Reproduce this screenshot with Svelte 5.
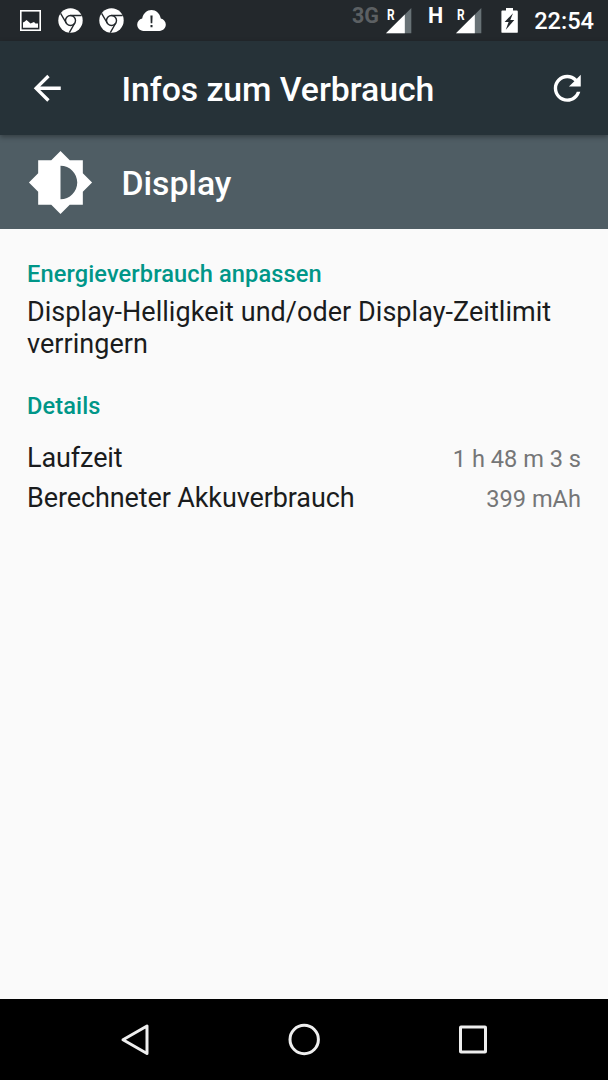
<script>
    const notifications = ["image", "chrome", "chrome", "cloud"];

    const signals = [
        { type: "3G", active: false },
        { type: "H", active: true }
    ];

    const details = [
        { label: "Laufzeit", value: "1 h 48 m 3 s" },
        { label: "Berechneter Akkuverbrauch", value: "399 mAh" }
    ];
</script>

<div class="screen">
    <div class="status-bar">
        <div class="notifications">
            {#each notifications as icon}
                {#if icon === "image"}
                    <svg class="image" width="21" height="21" viewBox="0 0 21 21">
                        <rect x=".8" y=".8" width="19.4" height="19.4" fill="none" stroke="#fff" stroke-width="1.6" />
                        <path d="M3 17.8V12.5L4.5 11.8 6.5 10l1.5 1.3 2.5 2.2 3.5-1.5 1.5 1.5h2.5v4.3z" fill="#fff" />
                    </svg>
                {:else if icon === "chrome"}
                    <svg class="chrome" width="25" height="25" viewBox="0 0 25 25">
                        <circle cx="12.5" cy="12.5" r="12.2" fill="#fff" />
                        <g fill="none" stroke="#23282c" stroke-width="1.4">
                            <circle cx="12.5" cy="12.5" r="5" />
                            <path d="M12.5 7.5h11.2M8.2 15L2.6 5.3M16.8 15l-5.5 9.6" />
                        </g>
                    </svg>
                {:else}
                    <svg class="cloud" width="29" height="21" viewBox="0 0 29 21">
                        <path d="M23.8 8.5C22.6 3.2 19 .1 14.5.1S6.4 3.2 5.2 8.5C2.3 9.3.2 11.5.2 14.6c0 3.7 2.6 6.3 6.3 6.3h16c3.7 0 6.3-2.6 6.3-6.3 0-3.1-2.1-5.3-5-6.1z" fill="#fff" />
                        <path d="M13.4 5.5h2.2l-.3 7.8h-1.6zM13.5 15h2v2.2h-2z" fill="#23282c" />
                    </svg>
                {/if}
            {/each}
        </div>
        <div class="system">
            {#each signals as { type, active }}
                <span class="network" class:active>{type}</span>
                <span class="signal">
                    <span class="roaming">R</span>
                    <svg width="26" height="26" viewBox="0 0 26 26">
                        <path d="M25.3 0v25.3H0z" fill="#687276" />
                        <path d="M18.8 6.5v18.8H0z" fill="#fff" />
                    </svg>
                </span>
            {/each}
            <svg class="battery" width="17" height="25" viewBox="0 0 17 25">
                <path d="M5 0h7v2.5h3.9c.5 0 .9.4.9.9v20.5c0 .5-.4.9-.9.9H1.3c-.5 0-.9-.4-.9-.9V3.4c0-.5.4-.9.9-.9H5z" fill="#fff" />
                <path d="M12 5.2L3.6 14h4L4.8 21.8l8.5-9.8H9.3z" fill="#23282c" />
            </svg>
            <span class="clock">22:54</span>
        </div>
    </div>

    <header class="app-bar">
        <svg class="back" width="40.5" height="40.5" viewBox="0 0 24 24">
            <path d="M20 11H7.83l5.59-5.59L12 4l-8 8 8 8 1.41-1.41L7.83 13H20v-2z" fill="#fff" />
        </svg>
        <h1>Infos zum Verbrauch</h1>
        <svg class="refresh" width="40.5" height="40.5" viewBox="0 0 24 24">
            <path d="M17.65 6.35C16.2 4.9 14.21 4 12 4c-4.42 0-7.99 3.58-7.99 8s3.57 8 7.99 8c3.73 0 6.84-2.55 7.73-6h-2.08c-.82 2.33-3.04 4-5.65 4-3.31 0-6-2.69-6-6s2.69-6 6-6c1.66 0 3.14.69 4.22 1.78L13 11h7V4l-2.35 2.35z" fill="#fff" />
        </svg>
    </header>

    <div class="entry">
        <svg width="67" height="67" viewBox="0 0 24 24">
            <path d="M20 15.31L23.31 12 20 8.69V4h-4.69L12 .69 8.69 4H4v4.69L.69 12 4 15.31V20h4.69L12 23.31 15.31 20H20v-4.69zM12 18V6c3.31 0 6 2.69 6 6s-2.69 6-6 6z" fill="#fff" />
        </svg>
        <h2>Display</h2>
    </div>

    <main>
        <h3>Energieverbrauch anpassen</h3>
        <p>Display-Helligkeit und/oder Display-Zeitlimit verringern</p>

        <h3 class="details-title">Details</h3>
        {#each details as { label, value }}
            <div class="row">
                <span class="label">{label}</span>
                <span class="value">{value}</span>
            </div>
        {/each}
    </main>

    <nav>
        <svg width="168.8" height="81" viewBox="0 0 168.8 81">
            <path d="M96 27v27.5L72 40.7z" />
        </svg>
        <svg width="168.8" height="81" viewBox="0 0 168.8 81">
            <circle cx="84.2" cy="40.5" r="14.2" />
        </svg>
        <svg width="168.8" height="81" viewBox="0 0 168.8 81">
            <rect x="72.5" y="28" width="25" height="25" rx=".5" />
        </svg>
    </nav>
</div>

<style>
    :global(body) {
        margin: 0;
    }

    .screen {
        display: flex;
        flex-direction: column;
        width: 608px;
        height: 1080px;
        overflow: hidden;
        background: #fafafa;
        color: #1a1c1d;
        font-family: Roboto, sans-serif;
    }

    svg {
        display: block;
        flex: none;
    }

    h1,
    h2,
    h3,
    p {
        margin: 0;
    }

    .status-bar {
        display: flex;
        flex: none;
        justify-content: space-between;
        height: 41px;
        box-sizing: border-box;
        padding: 0 14px 0 20px;
        background: #23282c;
        color: #fff;
    }

    .notifications {
        display: flex;
        align-items: center;
    }

    .chrome {
        margin-left: 17px;
    }

    .chrome + .chrome {
        margin-left: 16px;
    }

    .cloud {
        margin-left: 13px;
    }

    .system {
        display: flex;
        align-items: flex-start;
    }

    .network {
        margin-top: 4px;
        color: #5c6063;
        font-size: 21.5px;
        font-weight: 700;
        line-height: 24px;
    }

    .network.active {
        margin-left: 16px;
        color: #fff;
    }

    .signal {
        position: relative;
        margin: 8px 0 0 7px;
    }

    .active + .signal {
        margin-left: 13px;
    }

    .roaming {
        position: absolute;
        top: 0;
        left: 1px;
        font-size: 14px;
        font-weight: 700;
        line-height: 14px;
        transform: scaleX(0.85);
        transform-origin: left;
    }

    .battery {
        margin: 8px 0 0 18.5px;
    }

    .clock {
        margin-left: 16.5px;
        font-size: 23.6px;
        font-weight: 500;
        line-height: 42px;
    }

    .app-bar {
        position: relative;
        display: flex;
        flex: none;
        align-items: center;
        height: 94px;
        box-sizing: border-box;
        padding: 0 20.3px 0 27px;
        background: #263238;
        box-shadow: 0 2px 5px rgba(0, 0, 0, 0.35);
        color: #fff;
    }

    h1,
    h2 {
        font-size: 33.8px;
        font-weight: 500;
        letter-spacing: -0.06px;
        line-height: 40px;
    }

    h1 {
        flex: 1;
        margin-left: 54px;
        padding-top: 3px;
    }

    .entry {
        display: flex;
        flex: none;
        align-items: center;
        gap: 27.5px;
        height: 94px;
        padding-left: 27px;
        background: #4f5d64;
        color: #fff;
    }

    h2 {
        padding-top: 3px;
    }

    main {
        flex: 1;
        padding: 31px 27px 0;
    }

    h3 {
        color: #009688;
        font-size: 23.6px;
        font-weight: 500;
        letter-spacing: 0.12px;
        line-height: 28px;
    }

    p {
        margin-top: 8px;
        font-size: 27px;
        letter-spacing: 0.04px;
        line-height: 32px;
    }

    .details-title {
        margin: 32px 0 22px;
    }

    .row {
        display: flex;
        align-items: baseline;
        justify-content: space-between;
        height: 40px;
        font-size: 27px;
        line-height: 32px;
    }

    .label {
        letter-spacing: -0.11px;
    }

    .value {
        color: #757677;
        font-size: 23.6px;
    }

    nav {
        display: flex;
        flex: none;
        justify-content: center;
        height: 81px;
        background: #000;
    }

    nav svg {
        fill: none;
        stroke: #eee;
        stroke-width: 3;
        stroke-linejoin: round;
    }
</style>
